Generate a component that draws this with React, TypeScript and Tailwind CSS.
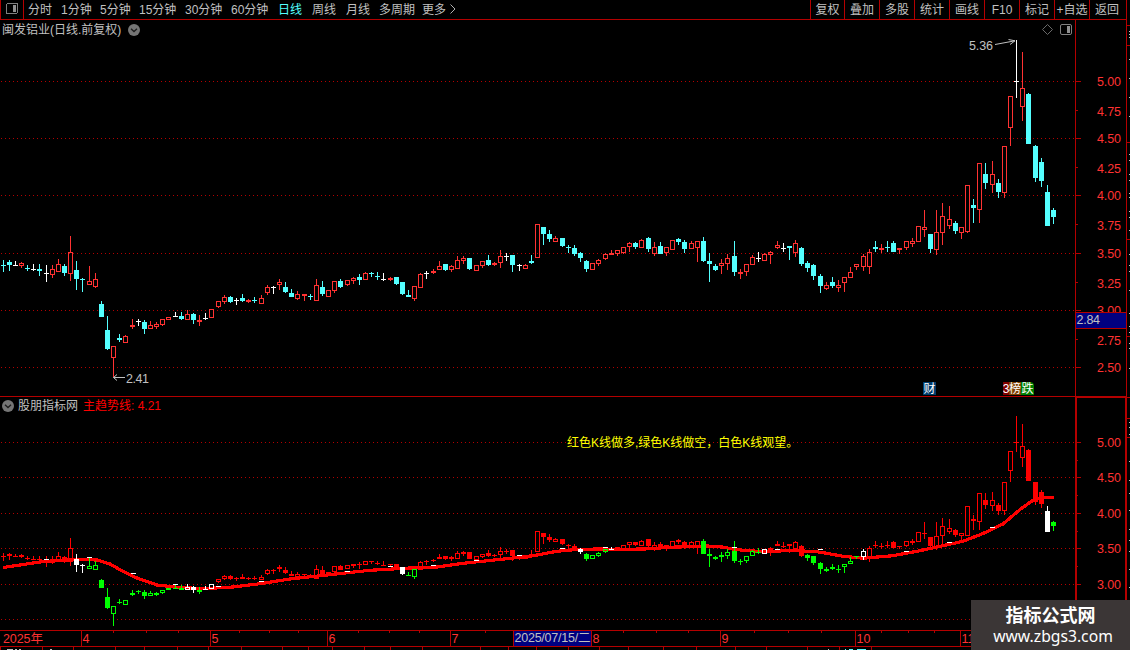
import type { ReactNode } from 'react'

type Candle = [kind: 'r' | 'c' | 'w', high: number, top: number, bottom: number, low: number]

// r = up (hollow), c = down (filled), w = flat
const candles: Candle[] = [
    ['c', 260, 265, 266, 272], ['c', 260, 262, 265, 271], ['w', 261, 265, 266, 266], ['r', 262, 263, 266, 268],
    ['c', 265, 268, 269, 271], ['w', 264, 269, 270, 271], ['c', 264, 269, 271, 276], ['w', 265, 273, 274, 282],
    ['r', 265, 269, 275, 278], ['r', 259, 264, 272, 272], ['c', 264, 266, 273, 276], ['r', 236, 252, 274, 281],
    ['c', 261, 270, 279, 290], ['c', 278, 279, 280, 292], ['r', 266, 281, 285, 285], ['r', 273, 279, 287, 288],
    ['c', 301, 304, 317, 317], ['c', 316, 330, 349, 350], ['r', 346, 346, 358, 377], ['c', 334, 338, 340, 342],
    ['r', 335, 336, 343, 343], ['r', 319, 325, 327, 329], ['w', 319, 321, 322, 326], ['c', 320, 322, 329, 334],
    ['r', 321, 325, 329, 329], ['r', 322, 324, 327, 329], ['r', 319, 319, 325, 326], ['r', 317, 317, 320, 320],
    ['w', 312, 316, 317, 317], ['c', 312, 316, 319, 320], ['r', 310, 314, 320, 320], ['c', 313, 314, 320, 324],
    ['r', 315, 320, 322, 326], ['w', 313, 318, 319, 320], ['r', 309, 309, 318, 318], ['r', 301, 301, 307, 308],
    ['r', 295, 297, 302, 304], ['c', 296, 297, 302, 303], ['w', 298, 300, 301, 305], ['c', 294, 298, 301, 302],
    ['r', 299, 300, 302, 303], ['c', 297, 300, 301, 303], ['r', 295, 298, 304, 304], ['r', 285, 287, 293, 295],
    ['w', 286, 287, 288, 294], ['r', 279, 282, 285, 290], ['c', 282, 287, 292, 293], ['c', 289, 293, 297, 297],
    ['r', 291, 294, 299, 300], ['r', 294, 294, 296, 301], ['c', 294, 296, 297, 300], ['r', 279, 285, 301, 301],
    ['c', 281, 287, 294, 296], ['r', 290, 290, 297, 297], ['r', 281, 281, 291, 293], ['c', 279, 281, 287, 288],
    ['r', 280, 280, 285, 286], ['r', 277, 278, 281, 284], ['c', 274, 277, 280, 285], ['r', 272, 273, 280, 280],
    ['c', 272, 273, 274, 277], ['c', 272, 276, 277, 280], ['w', 273, 279, 280, 281], ['r', 277, 278, 280, 281],
    ['c', 277, 277, 284, 285], ['c', 282, 282, 294, 295], ['c', 290, 295, 297, 297], ['r', 286, 286, 299, 301],
    ['r', 273, 274, 288, 288], ['w', 271, 273, 274, 279], ['r', 269, 271, 273, 274], ['r', 261, 266, 270, 270],
    ['c', 264, 264, 270, 271], ['r', 265, 266, 270, 272], ['r', 256, 260, 269, 269], ['r', 256, 258, 261, 264],
    ['c', 258, 258, 269, 270], ['r', 265, 265, 271, 271], ['r', 261, 261, 266, 268], ['c', 255, 260, 265, 266],
    ['r', 262, 263, 265, 266], ['r', 250, 256, 263, 268], ['w', 253, 256, 257, 261], ['c', 255, 255, 265, 272],
    ['w', 264, 265, 266, 271], ['r', 264, 265, 269, 269], ['c', 255, 261, 263, 264], ['r', 224, 224, 258, 258],
    ['c', 227, 227, 234, 245], ['c', 230, 234, 239, 242], ['r', 236, 238, 242, 242], ['c', 238, 238, 246, 247],
    ['c', 245, 247, 248, 253], ['c', 245, 248, 254, 256], ['c', 252, 253, 258, 262], ['c', 260, 261, 269, 272],
    ['r', 263, 263, 270, 270], ['r', 259, 260, 264, 266], ['r', 253, 254, 259, 260], ['r', 250, 253, 255, 255],
    ['r', 250, 250, 254, 256], ['r', 247, 247, 253, 254], ['r', 242, 243, 247, 252], ['c', 242, 243, 247, 249],
    ['r', 239, 240, 248, 248], ['c', 237, 238, 249, 252], ['r', 242, 247, 254, 256], ['c', 242, 246, 254, 254],
    ['r', 247, 247, 253, 256], ['r', 240, 240, 250, 250], ['c', 238, 239, 242, 245], ['c', 240, 242, 249, 253],
    ['r', 241, 243, 249, 249], ['r', 241, 241, 248, 262], ['c', 237, 241, 261, 262], ['c', 253, 261, 264, 282],
    ['c', 264, 266, 270, 271], ['r', 259, 263, 266, 274], ['r', 254, 258, 264, 270], ['c', 241, 256, 272, 276],
    ['r', 269, 272, 274, 279], ['r', 264, 264, 272, 276], ['r', 255, 257, 265, 265], ['w', 252, 258, 259, 262],
    ['r', 253, 254, 261, 261], ['r', 251, 252, 255, 264], ['r', 241, 245, 248, 249], ['w', 243, 248, 249, 252],
    ['c', 246, 246, 248, 260], ['r', 240, 243, 253, 257], ['c', 247, 248, 264, 266], ['c', 261, 263, 268, 272],
    ['c', 264, 265, 276, 280], ['c', 274, 276, 286, 293], ['r', 282, 285, 289, 290], ['c', 277, 282, 286, 288],
    ['r', 280, 285, 288, 292], ['r', 277, 277, 283, 292], ['r', 267, 272, 278, 278], ['r', 264, 264, 267, 270],
    ['r', 254, 256, 267, 271], ['r', 249, 252, 267, 274], ['c', 241, 247, 249, 252], ['r', 244, 248, 250, 253],
    ['c', 241, 247, 248, 252], ['c', 241, 243, 252, 252], ['r', 248, 248, 250, 254], ['r', 241, 241, 248, 250],
    ['r', 238, 241, 244, 247], ['r', 226, 226, 242, 242], ['r', 210, 227, 230, 237], ['c', 234, 234, 249, 253],
    ['r', 210, 232, 250, 255], ['r', 203, 216, 233, 245], ['r', 206, 219, 226, 229], ['c', 221, 223, 231, 234],
    ['r', 227, 227, 233, 239], ['r', 185, 185, 232, 233], ['c', 199, 205, 208, 223], ['r', 163, 163, 210, 223],
    ['c', 163, 174, 183, 189], ['r', 161, 174, 185, 193], ['c', 179, 183, 192, 198], ['r', 146, 146, 193, 198],
    ['r', 96, 96, 128, 146], ['w', 40, 81, 82, 98], ['r', 52, 88, 107, 121], ['c', 93, 94, 144, 144],
    ['c', 145, 146, 178, 182], ['c', 158, 162, 181, 187], ['c', 185, 192, 226, 226], ['c', 208, 210, 217, 224]
]

const upper = { r: '#ff3232', c: '#54ffff', w: '#ffffff' }

// Signal ranges of the indicator, everything outside them is red
const whiteBars = [12, 13, 30, 31, 33, 34, 65, 94, 99, 124, 140, 170]
const greenRanges = [[14, 29], [32, 32], [66, 67], [95, 98], [114, 123], [131, 139], [171, 171]]

const signalColor = (i: number) => {
    if (whiteBars.includes(i)) return '#ffffff'
    if (greenRanges.some(([a, b]) => i >= a && i <= b)) return '#00ff00'
    return '#ff0000'
}

const barX = (i: number) => 3 + 43 * Math.floor(i / 7) + 6 * (i % 7)
const toLower = (y: number) => Math.round(441.8 + (y - 81) * 0.6215)

const trend =
    '3,567.5 20,565 40,562 67,560 80,559.5 97,560 110,564 123,571.5 137,578 157,585 180,587.5 203,588.7 233,587 260,583.7 290,579 330,574.7 370,570.3 410,568 437,567 463,563.3 497,559.7 530,556.3 557,551.3 577,549.5 597,549 620,549.3 645,549 670,547.3 707,546 722,547 737,549.7 763,551.7 790,550.5 815,551.5 827,553.3 843,556.3 863,558.2 893,555.7 920,550.7 940,546.3 963,541.3 983,533.5 1003,524 1020,509.5 1032,501 1038,498.5 1043,497.5 1054,497.5'

// Short white marks lying on the trend line
const marks = [
    [44, 559], [87, 557], [131, 573], [173, 584], [216, 586], [259, 581], [345, 571], [388, 566], [431, 565],
    [474, 560], [517, 555], [560, 548], [603, 547], [732, 547], [775, 549], [818, 549], [904, 551], [947, 542], [990, 527]
]

const upperLabels: [string, number][] = [
    ['5.00', 86], ['4.75', 116], ['4.50', 143], ['4.25', 173], ['4.00', 200], ['3.75', 230],
    ['3.50', 258], ['3.25', 288], ['3.00', 315], ['2.75', 345], ['2.50', 372]
]
const lowerLabels: [string, number][] = [['5.00', 447], ['4.50', 482], ['4.00', 518], ['3.50', 553], ['3.00', 589]]

const upperGrid = [81, 138, 195, 253, 310, 367]
const lowerGrid = [442, 477, 513, 548, 584, 619]

const months: [number, string][] = [
    [81, '4'], [210, '5'], [327, '6'], [450, '7'], [591, '8'], [720, '9'], [855, '10'], [960, '11']
]
const weekTicks = [113, 146, 178, 239, 269, 298, 358, 389, 419, 485, 623, 656, 688, 754, 788, 821, 881, 908, 934]
const stripTicks = [
    0, 42, 73, 115, 144, 177, 208, 241, 282, 308, 332, 364, 390, 422, 480, 508, 536, 568, 599, 628, 663, 696, 735, 766, 807, 839, 871
]

const periods: [string, string][] = [
    ['分时', 'w-[33px]'], ['1分钟', 'w-[39px]'], ['5分钟', 'w-[39px]'], ['15分钟', 'w-[46px]'], ['30分钟', 'w-[46px]'],
    ['60分钟', 'w-[47px]'], ['日线', 'w-[34px] text-[#54ffff]'], ['周线', 'w-[34px]'], ['月线', 'w-[33px]'],
    ['多周期', 'w-[43px]'], ['更多', 'w-[27px]']
]
const tools = ['叠加', '多股', '统计', '画线', 'F10', '标记', '+自选', '返回']

const Bar = ({ x, color, hollow, y }: { x: number; color: string; hollow: boolean; y: number[] }) => {
    const [high, top, bottom, low] = y
    const height = Math.max(1, bottom - top)
    return (
        <g fill={color}>
            {top > high && <rect x={x} y={high} width="1" height={top - high} />}
            {low > bottom && <rect x={x} y={bottom} width="1" height={low - bottom} />}
            {hollow && height > 2 ? (
                <rect x={x - 1.5} y={top + 0.5} width="4" height={height - 1} fill="none" stroke={color} />
            ) : (
                <rect x={x - 2} y={top} width="5" height={height} />
            )}
        </g>
    )
}

const Grid = ({ rows }: { rows: number[] }) => (
    <>
        {rows.map((y) => (
            <line key={y} x1="1" x2="1075" y1={y + 0.5} y2={y + 0.5} stroke="#b40000" strokeDasharray="1 3" />
        ))}
    </>
)

const AxisText = ({ labels }: { labels: [string, number][] }) => (
    <>
        {labels.map(([label, y]) => (
            <text key={label} x="1097" y={y} textLength="24" fill="#ff3232" fontSize="12.5">
                {label}
            </text>
        ))}
    </>
)

const PanelButton = () => (
    <svg width="12" height="12" viewBox="0 0 12 12" fill="none" className="shrink-0">
        <circle cx="6" cy="6" r="6" fill="#757575" />
        <path d="M3 4.7 L6 7.5 L9 4.7" stroke="#1c1c1c" strokeWidth="1.3" />
    </svg>
)

const Tag = ({ className, children }: { className: string; children: ReactNode }) => (
    <span className={`flex h-[13px] items-center justify-center overflow-hidden text-[12px] leading-none text-white ${className}`}>
        {children}
    </span>
)

const App = () => {
    return (
        <div className="relative flex h-[650px] w-[1130px] overflow-hidden bg-black font-['Liberation_Sans','Noto_Sans_CJK_SC',sans-serif] text-[12px] text-[#c0c0c0]">
            <div className="flex w-[1126px] flex-col">
                {/* Top toolbar */}
                <header className="flex h-[20px] shrink-0 border-b border-[#b40000] leading-[20px] whitespace-nowrap">
                    <div className="flex w-[24px] items-start justify-center border-x border-[#b40000] pt-[3px]">
                        <svg width="12" height="11" viewBox="0 0 12 11" shapeRendering="crispEdges">
                            <rect x="0.5" y="0.5" width="11" height="10" rx="1.5" fill="none" stroke="#808080" />
                            <rect x="7" y="2" width="3" height="7" fill="#909090" />
                        </svg>
                    </div>
                    <nav className="flex w-[786px] pl-[4px]">
                        {periods.map(([label, style]) => (
                            <span key={label} className={`shrink-0 ${style}`}>
                                {label}
                            </span>
                        ))}
                        <svg width="8" height="18" viewBox="0 0 8 18" fill="none" stroke="#b0b0b0">
                            <path d="M1.5 4.5 L6 9 L1.5 13.5" />
                        </svg>
                    </nav>
                    <div className="flex text-center">
                        <span className="w-[34px] border-l border-[#b40000]">复权</span>
                        {tools.map((label) => (
                            <span key={label} className="w-[35px] border-l border-[#b40000]">
                                {label}
                            </span>
                        ))}
                    </div>
                </header>

                {/* Price panel */}
                <section className="relative flex h-[377px] shrink-0 border-b border-[#b40000]">
                    <svg width="1126" height="376" viewBox="0 20 1126 376">
                        <g shapeRendering="crispEdges">
                            <Grid rows={upperGrid} />
                            {candles.map(([kind, ...y], i) => (
                                <Bar key={i} x={barX(i)} color={upper[kind]} hollow={kind === 'r'} y={y} />
                            ))}
                            <rect x="1075" y="20" width="1" height="376" fill="#b40000" />
                            {upperGrid.map((y) => (
                                <rect key={y} x="1076" y={y} width="5" height="1" fill="#b40000" />
                            ))}
                            {[110, 167, 224, 282, 339].map((y) => (
                                <rect key={y} x="1076" y={y} width="2" height="1" fill="#b40000" />
                            ))}
                        </g>
                        <AxisText labels={upperLabels} />
                        <g shapeRendering="crispEdges">
                            <rect x="1076" y="312" width="50" height="17" fill="#b40000" />
                            <rect x="1076" y="313" width="50" height="15" fill="#000080" />
                        </g>
                        <g fill="#c0c0c0" fontSize="12.5">
                            <text x="1076.5" y="324" textLength="23.5">2.84</text>
                            <text x="969" y="50" textLength="24">5.36</text>
                            <text x="126" y="383" textLength="23">2.41</text>
                        </g>
                        <g fill="none" stroke="#c0c0c0">
                            <path d="M995 44.5 L1015 40.8 M1008.5 39.5 L1015 40.8 L1010 44.5" />
                            <path d="M113.5 377.5 H125 M117 374.5 L113.5 377.5 L117 380.5" />
                        </g>
                        <path d="M1042.5 29.5 L1047.5 24.5 L1052.5 29.5 L1047.5 34.5 Z" fill="none" stroke="#6a6a6a" />
                        <rect x="1060.5" y="24.5" width="11" height="10" rx="1.5" fill="none" stroke="#808080" />
                        <rect x="1067" y="26" width="3" height="7" fill="#909090" />
                    </svg>
                    <div className="absolute top-0 left-[2px] flex h-[19px] items-center gap-[7px]">
                        <span>闽发铝业(日线.前复权)</span>
                        <PanelButton />
                    </div>
                    <div className="absolute top-[362px] left-[923px] flex">
                        <Tag className="w-[13px] bg-[#003c6c]">财</Tag>
                        <Tag className="ml-[67px] w-[6px] bg-[#800000]">3</Tag>
                        <Tag className="w-[12px] bg-[#804000]">榜</Tag>
                        <Tag className="w-[13px] rounded-tr-sm bg-[#008000]">跌</Tag>
                    </div>
                </section>

                {/* Indicator panel */}
                <section className="relative h-[233px] shrink-0">
                    <svg width="1126" height="233" viewBox="0 397 1126 233">
                        <g shapeRendering="crispEdges">
                            <Grid rows={lowerGrid} />
                            <polyline points={trend} fill="none" stroke="#ff0000" strokeWidth="3.2" />
                            {candles.map(([kind, ...y], i) => (
                                <Bar key={i} x={barX(i)} color={signalColor(i)} hollow={kind === 'r'} y={y.map(toLower)} />
                            ))}
                            {marks.map(([x, y]) => (
                                <rect key={x} x={x} y={y} width="5" height="1" fill="#ffffff" />
                            ))}
                            <rect x="1075" y="397" width="2" height="233" fill="#b40000" />
                            <rect x="1075" y="397" width="51" height="1" fill="#b40000" />
                            <rect x="1125" y="397" width="1" height="233" fill="#b40000" />
                            {lowerGrid.map((y) => (
                                <rect key={y} x="1077" y={y} width="4" height="1" fill="#b40000" />
                            ))}
                            {[460, 495, 531, 566].map((y) => (
                                <rect key={y} x="1077" y={y} width="1" height="1" fill="#b40000" />
                            ))}
                        </g>
                        <AxisText labels={lowerLabels} />
                    </svg>
                    <div className="absolute top-0 left-[2px] flex h-[17px] items-center whitespace-nowrap">
                        <PanelButton />
                        <span className="ml-[4px] w-[65px]">股朋指标网</span>
                        <span className="text-[#ff0000]">主趋势线: 4.21</span>
                    </div>
                    <div className="absolute top-[37px] left-[567px] leading-[18px] whitespace-nowrap text-[#ffff00]">
                        红色K线做多,绿色K线做空，白色K线观望。
                    </div>
                </section>

                {/* Time axis */}
                <footer className="h-[20px] shrink-0">
                    <svg width="1126" height="20" viewBox="0 630 1126 20">
                        <g fill="#b40000" shapeRendering="crispEdges">
                            <rect x="0" y="630" width="1126" height="1" />
                            <rect x="0" y="646" width="1126" height="1" />
                            {months.map(([x]) => (
                                <rect key={x} x={x} y="630" width="1" height="16" />
                            ))}
                            {weekTicks.map((x) => (
                                <rect key={x} x={x} y="631" width="1" height="2" />
                            ))}
                            {stripTicks.map((x) => (
                                <rect key={x} x={x} y="647" width="1" height="3" />
                            ))}
                            <rect x="513" y="630" width="1" height="16" />
                            <rect x="514" y="631" width="77" height="15" fill="#000080" />
                            <path d="M7 649h6v1H7z M15 649h2v1h-2z M19 649h2v1h-2z M50 649h2v1h-2z M828 649h1v1h-1z" fill="#c0c0c0" />
                            <path d="M845 649h1v1h-1z M849 649h4v1h-4z M857 649h9v1h-9z" fill="#54ffff" />
                        </g>
                        <g fill="#ff3232" fontSize="12.5">
                            <text x="3" y="643" textLength="40">2025年</text>
                            {months.map(([x, label]) => (
                                <text key={x} x={x + 1.5} y="643">{label}</text>
                            ))}
                            <text x="514.5" y="642" textLength="76" fill="#c0c0c0">2025/07/15/二</text>
                        </g>
                    </svg>
                </footer>
            </div>

            {/* Edge of the neighbouring panel */}
            <svg width="4" height="650" viewBox="1126 0 4 650" shapeRendering="crispEdges">
                <rect x="1126" y="0" width="1" height="650" fill="#b40000" />
                {[25, 45, 142, 239, 336, 397, 418, 437].map((y) => (
                    <rect key={y} x="1127" y={y} width="3" height="1" fill="#b40000" />
                ))}
                {[31, 34, 37, 59, 78, 97, 116, 154, 160, 174, 180, 193, 197, 211, 217, 230, 254, 265, 271, 290, 313, 326, 332, 343, 348, 368, 422, 427, 434, 461, 480, 493, 510, 529, 540, 551, 569, 587].map((y) => (
                    <rect key={y} x="1129" y={y} width="1" height="1" fill="#c0c0c0" />
                ))}
            </svg>

            {/* Site badge */}
            <div className="absolute right-0 bottom-0 flex h-[50px] w-[159px] flex-col items-center bg-[#3b3636] text-white">
                <span className="mt-[5px] text-[18px] leading-[22px] font-bold">指标公式网</span>
                <span className="mr-[-5px] font-['Noto_Sans','Open_Sans',sans-serif] text-[15.7px] leading-[18px]">www.zbgs3.com</span>
            </div>
        </div>
    )
}

export default App
